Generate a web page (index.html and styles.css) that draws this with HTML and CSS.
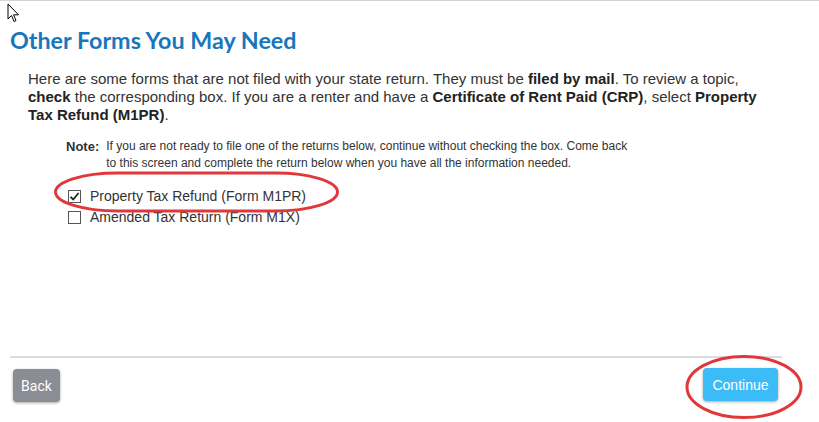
FILE: index.html
```html
<!DOCTYPE html>
<html>
<head>
<meta charset="utf-8">
<link rel="stylesheet" href="styles.css">
</head>
<body>
<div class="page">
  <main class="content">
    <h1 class="title">Other Forms You May Need</h1>
    <p class="intro">Here are some forms that are not filed with your state return. They must be <b>filed by mail</b>. To review a topic,<br><b>check</b> the corresponding box. If you are a renter and have a <b>Certificate of Rent Paid (CRP)</b>, select <b>Property</b><br><b>Tax Refund (M1PR)</b>.</p>
    <div class="note">
      <span class="note-label">Note:</span>
      <span class="note-text">If you are not ready to file one of the returns below, continue without checking the box. Come back<br>to this screen and complete the return below when you have all the information needed.</span>
    </div>
    <ul class="options">
      <li class="option"><span class="box checked"><svg viewBox="0 0 13 13" width="13" height="13"><path d="M2.5 6.8 L5.2 9.5 L10.6 3" fill="none" stroke="#222" stroke-width="1.8"/></svg></span>Property Tax Refund (Form M1PR)</li>
      <li class="option"><span class="box"></span>Amended Tax Return (Form M1X)</li>
    </ul>
  </main>
  <footer class="footer">
    <button class="btn back">Back</button>
    <button class="btn continue">Continue</button>
  </footer>
</div>
<svg class="cursor" width="14" height="20" viewBox="0 0 14 20"><path d="M1 1 L1 16 L4.5 12.5 L7 18.5 L9 17.6 L6.6 11.8 L11.5 11.8 Z" fill="#fff" stroke="#000" stroke-width="1"/></svg>
<svg class="mark mark1" width="290" height="46" viewBox="0 0 290 46"><rect x="1.5" y="2" width="282" height="38" rx="62" ry="19" fill="none" stroke="#e0373b" stroke-width="3"/></svg>
<svg class="mark mark2" width="122" height="68" viewBox="0 0 122 68"><ellipse cx="60" cy="33" rx="57" ry="30.5" fill="none" stroke="#e0373b" stroke-width="3"/></svg>
</body>
</html>
```
FILE: styles.css
```css
html, body {
  margin: 0;
  padding: 0;
  background: #fff;
}
body {
  width: 819px;
  height: 422px;
  overflow: hidden;
  position: relative;
  border-top: 1px solid #d4d4d4;
  box-sizing: border-box;
  font-family: Arial, "Liberation Sans", sans-serif;
  color: #333;
}
.page {
  display: flex;
  flex-direction: column;
  height: 421px;
  padding: 0 37px 0 10px;
}
.content {
  flex: 1;
}
.title {
  margin: 25px 0 0 0;
  font-family: Lato, "Open Sans", sans-serif;
  font-weight: 700;
  font-size: 23.3px;
  line-height: 28px;
  color: #1a76bb;
}
.intro {
  margin: 16px 0 0 18px;
  font-size: 15px;
  line-height: 18px;
  color: #333;
  width: 760px;
  white-space: nowrap;
}
.intro b {
  font-weight: 700;
  color: #222;
}
.note {
  display: flex;
  margin: 14px 0 0 56px;
  font-size: 12px;
  line-height: 17px;
}
.note-label {
  font-weight: 700;
  font-size: 13px;
  color: #333;
  margin-right: 7px;
  flex: none;
}
.note-text {
  color: #333;
  white-space: nowrap;
}
.options {
  list-style: none;
  margin: 14px 0 0 58px;
  padding: 0;
}
.option {
  display: flex;
  align-items: center;
  font-size: 14px;
  line-height: 21px;
  color: #333;
}
.box {
  width: 13px;
  height: 13px;
  border: 1px solid #555;
  box-sizing: border-box;
  margin-right: 9px;
  display: flex;
  align-items: center;
  justify-content: center;
  background: #fff;
  position: relative;
}
.box svg {
  position: absolute;
  left: -1px;
  top: -1px;
}
.footer {
  border-top: 2px solid #dcdcdc;
  display: flex;
  justify-content: space-between;
  align-items: flex-start;
  padding: 10px 0 0 3px;
  height: 66px;
  box-sizing: border-box;
}
.btn {
  border: none;
  border-radius: 4px;
  color: #fff;
  font-family: Roboto, Arial, sans-serif;
  font-size: 14px;
  height: 33px;
  cursor: pointer;
  box-shadow: 0 1px 3px rgba(0,0,0,0.35);
}
.back {
  background: #8b8d95;
  width: 47px;
  padding: 0;
  margin-top: 1px;
}
.continue {
  background: #3cbcf6;
  width: 75px;
  padding: 0;
  margin-right: 4px;
  font-family: Arial, "Liberation Sans", sans-serif;
}
.cursor {
  position: absolute;
  left: 7px;
  top: 2px;
}
.mark {
  position: absolute;
}
.mark1 {
  left: 54px;
  top: 170px;
}
.mark2 {
  left: 684px;
  top: 353px;
}
```
